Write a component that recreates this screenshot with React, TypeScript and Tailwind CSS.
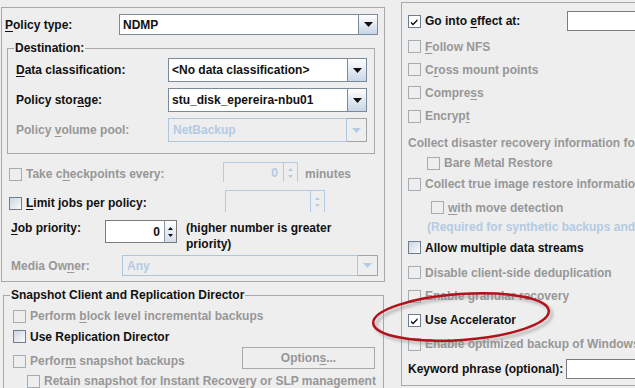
import React from 'react';

type Kind = 'off' | 'on' | 'dis';

const Mn = ({ t, u }: { t: string; u?: number }) => {
    if (u === undefined) return <>{t}</>;
    return (
        <>
            {t.slice(0, u)}
            <span className="underline underline-offset-2">{t[u]}</span>
            {t.slice(u + 1)}
        </>
    );
};

const Box = ({ kind }: { kind: Kind }) => {
    if (kind === 'dis') {
        return <span className="block size-[13px] shrink-0 border border-[#a4acb4]" />;
    }
    if (kind === 'off') {
        return (
            <span className="block size-[13px] shrink-0 border border-[#6f7e8e] bg-linear-to-br from-[#cbd5e1] to-[#fbfcfd]" />
        );
    }
    return (
        <span className="flex size-[13px] shrink-0 items-center justify-center border border-[#6f7e8e] bg-white">
            <svg width="11" height="11" viewBox="0 0 11 11">
                <path d="M2 5.5 L4 7.5 L8.5 3 L8.5 5 L4 9.5 L2 7.5 Z" fill="#111" />
            </svg>
        </span>
    );
};

const Arrow = ({ color }: { color: string }) => (
    <svg width="9" height="5" viewBox="0 0 9 5">
        <polygon points="0,0 9,0 4.5,5" fill={color} />
    </svg>
);

const Combo = ({ value, className, dis }: { value: string; className: string; dis?: boolean }) => {
    if (dis) {
        return (
            <div className={`flex ${className}`}>
                <div className="flex flex-1 items-center border border-[#aec5dc] pl-[4px] text-[#b3cbe3]">{value}</div>
                <div className="flex w-[20px] items-center justify-center border border-l-0 border-[#a3a3a3]">
                    <Arrow color="#b3cbe3" />
                </div>
            </div>
        );
    }
    return (
        <div className={`flex border border-[#7a8a99] ${className}`}>
            <div className="flex flex-1 items-center bg-white pl-[3px]">{value}</div>
            <div className="flex w-[19px] items-center justify-center border-l border-[#7a8a99] bg-linear-to-b from-white to-[#c8d6e6]">
                <Arrow color="#111" />
            </div>
        </div>
    );
};

const SpinArrows = ({ color }: { color: string }) => (
    <>
        <svg width="5" height="3" viewBox="0 0 5 3">
            <polygon points="0,3 5,3 2.5,0" fill={color} />
        </svg>
        <svg width="5" height="3" viewBox="0 0 5 3" className="mt-[4px]">
            <polygon points="0,0 5,0 2.5,3" fill={color} />
        </svg>
    </>
);

const Spin = ({ value, className, dis }: { value: string; className: string; dis?: boolean }) => {
    if (dis) {
        return (
            <div className={`flex border-x border-t border-[#b3cbe3] ${className}`}>
                <div className="flex flex-1 items-center justify-end pr-[5px] text-[#b3cbe3]">{value}</div>
                <div className="flex w-[14px] flex-col items-center justify-center border-l border-[#b3cbe3]">
                    <SpinArrows color="#b3cbe3" />
                </div>
            </div>
        );
    }
    return (
        <div className={`flex border border-[#7b7b7b] ${className}`}>
            <div className="flex flex-1 items-center justify-end bg-white pr-[4px]">{value}</div>
            <div className="flex w-[12px] flex-col items-center justify-center border-l border-[#8a99a8] bg-linear-to-b from-white to-[#d3dde9]">
                <SpinArrows color="#111" />
            </div>
        </div>
    );
};

const Check = ({ kind, t, u, className }: { kind: Kind; t: string; u?: number; className: string }) => (
    <div
        className={`flex shrink-0 items-center gap-[4px] whitespace-nowrap ${kind === 'dis' ? 'text-[#979797]' : ''} ${className}`}
    >
        <Box kind={kind} />
        <span>
            <Mn t={t} u={u} />
        </span>
    </div>
);

const App = () => {
    return (
        <div className="relative flex h-[388px] w-[635px] overflow-hidden bg-[#eeeeee] font-['Liberation_Sans',Arial,sans-serif] text-[12px] font-bold leading-[14px] text-[#111]">
            {/* left column */}
            <div className="flex w-[386px] shrink-0 flex-col">
                <div className="ml-[1px] mt-[7px] flex h-[275px] w-[384px] shrink-0 flex-col border border-[#a8a8a8]">
                    <div className="mt-[6px] flex h-[21px] shrink-0 items-center">
                        <div className="w-[117px] pl-[3px]">
                            <Mn t="Policy type:" u={0} />
                        </div>
                        <Combo value="NDMP" className="h-[21px] w-[259px]" />
                    </div>

                    <fieldset className="ml-[5px] mt-[6px] w-[368px] shrink-0 border border-[#a8a8a8] pb-[11px]">
                        <legend className="ml-[6px] px-[1px] leading-[14px]">Destination:</legend>
                        <div className="mt-[3px] flex h-[24px] items-center">
                            <div className="w-[160px] pl-[8px]">
                                <Mn t="Data classification:" u={0} />
                            </div>
                            <Combo value="<No data classification>" className="h-[24px] w-[199px]" />
                        </div>
                        <div className="mt-[6px] flex h-[24px] items-center">
                            <div className="w-[160px] pl-[8px]">
                                <Mn t="Policy storage:" u={11} />
                            </div>
                            <Combo value="stu_disk_epereira-nbu01" className="h-[24px] w-[199px]" />
                        </div>
                        <div className="mt-[6px] flex h-[24px] items-center">
                            <div className="w-[160px] pl-[8px] text-[#979797]">
                                <Mn t="Policy volume pool:" u={7} />
                            </div>
                            <Combo value="NetBackup" dis className="h-[24px] w-[199px]" />
                        </div>
                    </fieldset>

                    <div className="mt-[8px] flex h-[20px] shrink-0 items-center">
                        <Check kind="dis" t="Take checkpoints every:" u={6} className="mt-[4px] w-[221px] pl-[7px]" />
                        <Spin value="0" dis className="h-[20px] w-[75px]" />
                        <span className="ml-[7px] mt-[4px] text-[#979797]">minutes</span>
                    </div>

                    <div className="mt-[8px] flex h-[22px] shrink-0 items-center">
                        <Check kind="off" t="Limit jobs per policy:" u={0} className="mt-[4px] w-[223px] pl-[7px]" />
                        <Spin value="" dis className="h-[22px] w-[100px]" />
                    </div>

                    <div className="mt-[8px] flex h-[32px] shrink-0 items-start leading-[16px]">
                        <div className="w-[103px] pl-[9px]">
                            <Mn t="Job priority:" u={0} />
                        </div>
                        <Spin value="0" className="h-[23px] w-[72px]" />
                        <div className="ml-[9px] whitespace-nowrap">
                            (higher number is greater
                            <br />
                            priority)
                        </div>
                    </div>

                    <div className="mt-[3px] flex h-[21px] shrink-0 items-center">
                        <div className="w-[120px] pl-[9px] text-[#979797]">
                            <Mn t="Media Owner:" u={8} />
                        </div>
                        <Combo value="Any" dis className="h-[21px] w-[256px]" />
                    </div>
                </div>

                <fieldset className="ml-[3px] mt-[6px] w-[381px] shrink-0 border border-[#a8a8a8]">
                    <legend className="ml-[6px] px-[1px] leading-[14px]">Snapshot Client and Replication Director</legend>
                    <Check kind="dis" t="Perform block level incremental backups" u={8} className="mt-[4px] h-[20px] pl-[9px]" />
                    <Check kind="off" t="Use Replication Director" className="h-[21px] pl-[9px]" />
                    <div className="flex">
                        <Check kind="dis" t="Perform snapshot backups" u={6} className="mt-[4px] h-[20px] w-[238px] pl-[9px]" />
                        <div className="flex h-[22px] w-[133px] items-center justify-center border border-[#a9a9a9] text-[#979797]">
                            <Mn t="Options..." u={6} />
                        </div>
                    </div>
                    <Check
                        kind="dis"
                        t="Retain snapshot for Instant Recovery or SLP management"
                        u={33}
                        className="h-[20px] pl-[23px]"
                    />
                </fieldset>
            </div>

            {/* right column */}
            <div className="ml-[15px] mt-[2px] flex h-[384px] w-[260px] shrink-0 flex-col border border-[#a8a8a8]">
                <div className="mt-[8px] flex h-[20px] shrink-0 items-center">
                    <Check kind="on" t="Go into effect at:" u={8} className="w-[165px] pl-[6px]" />
                    <div className="h-[20px] w-[80px] border border-[#7b7b7b] bg-white" />
                </div>
                <Check kind="dis" t="Follow NFS" u={0} className="mt-[4px] h-[23px] pl-[6px]" />
                <Check kind="dis" t="Cross mount points" u={1} className="h-[23px] pl-[6px]" />
                <Check kind="dis" t="Compress" u={6} className="h-[23px] pl-[6px]" />
                <Check kind="dis" t="Encrypt" u={6} className="h-[24px] pl-[6px]" />
                <div className="mt-[4px] flex h-[22px] shrink-0 items-center whitespace-nowrap pl-[6px] text-[#979797]">
                    Collect disaster recovery information for:
                </div>
                <Check kind="dis" t="Bare Metal Restore" className="h-[18px] pl-[25px]" />
                <Check kind="dis" t="Collect true image restore information" className="mt-[1px] h-[22px] pl-[6px]" />
                <Check kind="dis" t="with move detection" u={0} className="mt-[1px] h-[23px] pl-[29px]" />
                <div className="flex h-[16px] shrink-0 items-center whitespace-nowrap pl-[25px] text-[#b3cbe3]">
                    (Required for synthetic backups and Accelerator)
                </div>
                <Check kind="off" t="Allow multiple data streams" className="mt-[1px] h-[23px] pl-[6px]" />
                <Check kind="dis" t="Disable client-side deduplication" className="mt-[2px] h-[23px] pl-[6px]" />
                <Check kind="dis" t="Enable granular recovery" className="h-[24px] pl-[6px]" />
                <Check kind="on" t="Use Accelerator" className="h-[24px] pl-[6px]" />
                <Check kind="dis" t="Enable optimized backup of Windows deduplicated volumes" className="h-[24px] pl-[6px]" />
                <div className="mt-[3px] flex h-[20px] shrink-0 items-center">
                    <div className="w-[164px] whitespace-nowrap pl-[6px]">Keyword phrase (optional):</div>
                    <div className="h-[20px] w-[80px] border border-[#7b7b7b] bg-white" />
                </div>
            </div>

            {/* red highlight drawn over the dialog */}
            <svg className="pointer-events-none absolute left-0 top-0" width="635" height="388" viewBox="0 0 635 388">
                <defs>
                    <filter id="sh" x="-20%" y="-50%" width="140%" height="200%">
                        <feGaussianBlur stdDeviation="1.5" />
                    </filter>
                </defs>
                <ellipse
                    cx="464"
                    cy="320"
                    rx="88"
                    ry="23"
                    transform="rotate(-4 464 320)"
                    fill="none"
                    stroke="#8a8a8a"
                    strokeOpacity="0.6"
                    strokeWidth="2.5"
                    filter="url(#sh)"
                />
                <ellipse
                    cx="461"
                    cy="317"
                    rx="88"
                    ry="23"
                    transform="rotate(-4 461 317)"
                    fill="none"
                    stroke="#b3121c"
                    strokeWidth="2.5"
                />
            </svg>
        </div>
    );
};

export default App;
